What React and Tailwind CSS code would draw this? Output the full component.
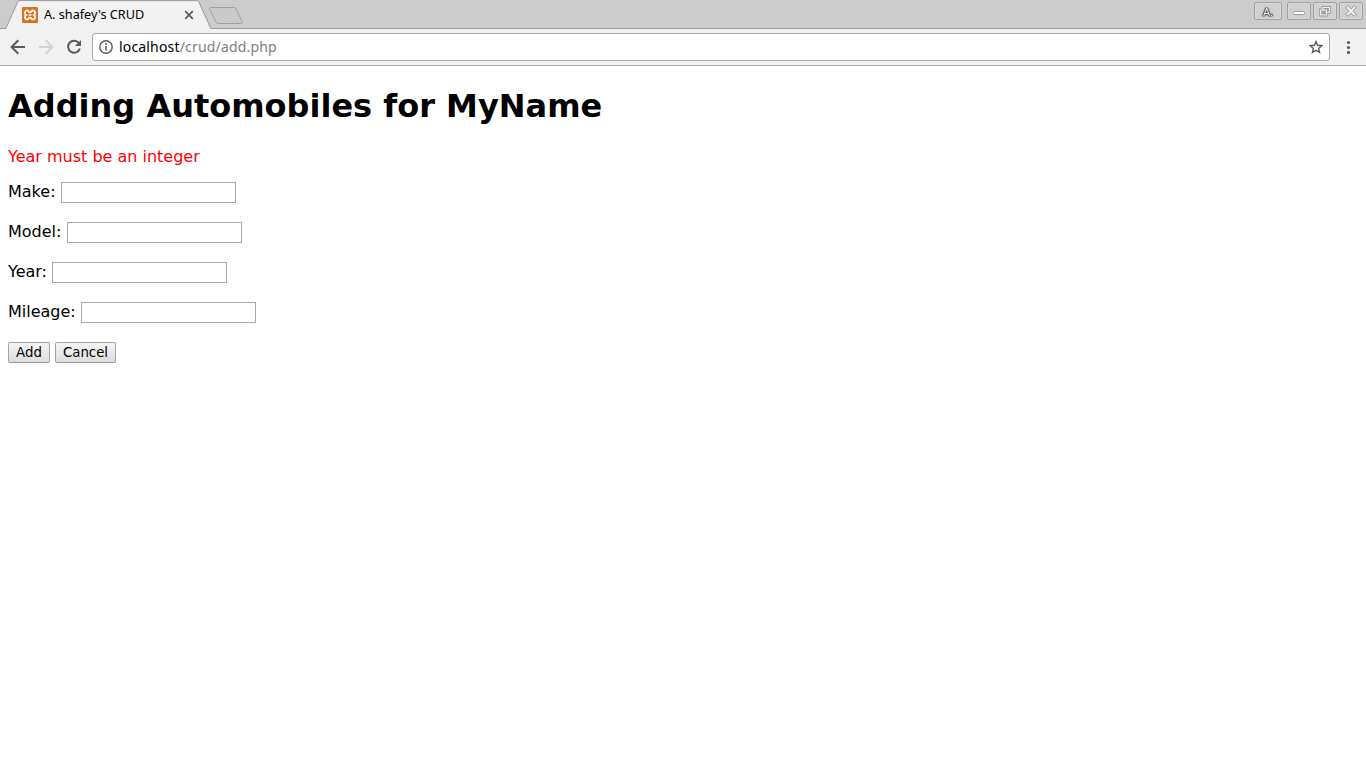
import React from 'react';

function WindowButton({ className, label, children }) {
  return (
    <button
      aria-label={label}
      className={`flex h-[18px] shrink-0 items-center justify-center rounded-[2px] border border-[#a0a0a0] bg-[#d0d0d0] shadow-[inset_0_0_0_1px_#d9d9d9] ${className}`}
    >
      {children}
    </button>
  );
}

function TabStrip() {
  return (
    <div className="relative flex h-[29px] bg-[#cccccc]">
      <svg className="absolute left-0 top-0" width="1366" height="29" viewBox="0 0 1366 29" fill="none">
        <path d="M0 28.5H5.5L17.6 2.2Q18.2 .8 19.8 .8H196.8Q198.4 .8 199 2.2L210.8 28.5H1366V29H0Z" fill="#f2f2f2" />
        <path d="M0 28.5H5.8L17.6 2.2Q18.2 .6 19.8 .6H196.8Q198.4 .6 199 2.2L210.8 28.5H1366" stroke="#999999" />
        <path d="M211 7.5H233.8Q235.6 7.5 236.3 9.2L242 21.5Q242.9 23.5 241.2 23.5H218.5Q216.6 23.5 215.8 21.7L209.7 9.3Q208.9 7.5 211 7.5Z" fill="#cacaca" stroke="#a0a0a0" />
      </svg>
      <div className="relative flex h-[29px] w-[211px] items-center pl-[22px]">
        <svg width="16" height="16" viewBox="0 0 16 16" className="shrink-0">
          <rect width="16" height="16" rx="1.5" fill="#ec6c12" />
          <rect x=".5" y=".5" width="15" height="15" rx="1" fill="none" stroke="#cf7435" />
          <path d="M4 8C2.2 6.8 2.7 3.5 4.9 3.5C6.8 3.5 6.4 5.4 8 5.4C9.6 5.4 9.2 3.5 11.1 3.5C13.3 3.5 13.8 6.8 12 8C13.8 9.2 13.3 12.5 11.1 12.5C9.2 12.5 9.6 10.6 8 10.6C6.4 10.6 6.8 12.5 4.9 12.5C2.7 12.5 2.2 9.2 4 8Z" fill="none" stroke="#fff" strokeWidth="1.9" />
          <path d="M6.3 8H9.7" stroke="#fff" strokeWidth="1.2" />
        </svg>
        <span className="mb-[2px] ml-[6px] w-[140px] whitespace-nowrap font-['Noto_Sans',sans-serif] text-[12.67px] leading-[18px] text-black">A. shafey's CRUD</span>
        <svg width="10" height="10" viewBox="0 0 10 10" className="shrink-0">
          <path d="M1.2 1.2L8.8 8.8M8.8 1.2L1.2 8.8" stroke="#5a5a5a" strokeWidth="1.7" />
        </svg>
      </div>
      <div className="relative ml-auto flex pr-[3px] pt-[2px]">
        <WindowButton label="Profile" className="mr-[5px] w-[28px]">
          <span className="font-['Noto_Sans',sans-serif] text-[11px] font-medium leading-none text-[#f2f2f2] [text-shadow:0_0_1px_#000,0_0_1px_#000,0_0_1px_#111,0_0_1px_#222,0_0_2px_#555]">A.</span>
        </WindowButton>
        <WindowButton label="Minimize" className="mr-[2px] w-[24px]">
          <svg width="14" height="14" viewBox="0 0 14 14">
            <rect x="1.5" y="7.5" width="11" height="3" rx="1" fill="#fff" stroke="#999" />
          </svg>
        </WindowButton>
        <WindowButton label="Restore" className="mr-[2px] w-[24px]">
          <svg width="14" height="14" viewBox="0 0 14 14" fill="none">
            <path d="M5 3.5H11.5V8.5H5ZM2.5 6H8.5V11H2.5Z" stroke="#999" strokeWidth="2.8" />
            <path d="M5 3.5H11.5V8.5H5Z" stroke="#f0f0f0" strokeWidth="1.2" />
            <path d="M2.5 6H8.5V11H2.5Z" fill="#a3a3a3" stroke="#f0f0f0" strokeWidth="1.2" />
          </svg>
        </WindowButton>
        <WindowButton label="Close window" className="w-[24px]">
          <svg width="14" height="14" viewBox="0 0 14 14" fill="none">
            <path d="M2.5 2.5L11.5 11.5M11.5 2.5L2.5 11.5" stroke="#999" strokeWidth="3.6" />
            <path d="M3 3L11 11M11 3L3 11" stroke="#f6f6f6" strokeWidth="1.9" />
          </svg>
        </WindowButton>
      </div>
    </div>
  );
}

function Toolbar() {
  return (
    <div className="flex h-[37px] items-center border-b border-[#b0b0b0] bg-[#f2f2f2] pl-[10px]">
      <svg width="16" height="16" viewBox="0 0 16 16" fill="none" stroke="#5a5a5a" strokeWidth="2">
        <path d="M15 8H2M8.3 1.3L1.6 8L8.3 14.7" />
      </svg>
      <svg className="ml-[12px]" width="16" height="16" viewBox="0 0 16 16" fill="none" stroke="#d3d3d3" strokeWidth="2">
        <path d="M1 8H14M7.7 1.3L14.4 8L7.7 14.7" />
      </svg>
      <svg className="ml-[12px]" width="16" height="16" viewBox="0 0 16 16" fill="none">
        <path d="M12.9 4.1A6 6 0 1 0 13.8 9.6" stroke="#5a5a5a" strokeWidth="2" />
        <path d="M15 1V7H9Z" fill="#5a5a5a" />
      </svg>
      <div className="ml-[10px] flex h-[28px] w-[1238px] items-center rounded-[3px] border border-[#a9a9a9] bg-white pl-[6px]">
        <svg width="14" height="14" viewBox="0 0 14 14" fill="none">
          <circle cx="7" cy="7" r="6.2" stroke="#5a5a5a" strokeWidth="1.4" />
          <path d="M7 6V10.5M7 3.3V5" stroke="#5a5a5a" strokeWidth="1.6" />
        </svg>
        <span className="ml-[6px] whitespace-nowrap font-['Noto_Sans',sans-serif] text-[14px] leading-[20px] tracking-[0.17px] text-black">
          localhost<span className="text-[#808080]">/crud/add.php</span>
        </span>
        <svg className="ml-auto mr-[6px]" width="14" height="14" viewBox="0 0 14 14" fill="none">
          <path d="M7 1.6L8.6 5.3L12.7 5.7L9.6 8.4L10.5 12.4L7 10.3L3.5 12.4L4.4 8.4L1.3 5.7L5.4 5.3Z" stroke="#5a5a5a" strokeWidth="1.4" />
        </svg>
      </div>
      <svg className="ml-[16px]" width="5" height="14" viewBox="0 0 5 14" fill="#5a5a5a">
        <circle cx="2.5" cy="2.5" r="1.6" />
        <circle cx="2.5" cy="7.5" r="1.6" />
        <circle cx="2.5" cy="12.4" r="1.6" />
      </svg>
    </div>
  );
}

function Field({ label, width }) {
  return (
    <label className="mb-[19px] flex h-[21px]">
      <span className={`${width} shrink-0 whitespace-nowrap leading-[19px]`}>{label}</span>
      <input type="text" className="h-[21px] w-[175px] border border-[#a9a9a9] bg-white px-[2px] text-[13.33px] outline-none" />
    </label>
  );
}

function FormButton({ children, className }) {
  return (
    <button type="button" className={`h-[21px] rounded-[2px] border border-[#a6a6a6] border-b-[#999999] bg-linear-to-b from-[#f5f5f5] to-[#dddddd] text-center text-[13.33px] leading-[19px] text-black ${className}`}>
      {children}
    </button>
  );
}

export default function App() {
  return (
    <div className="flex h-[768px] w-[1366px] flex-col overflow-hidden bg-white">
      <TabStrip />
      <Toolbar />
      <main className="px-2 pt-[21px] font-['DejaVu_Sans',sans-serif] text-[16px] text-black">
        <h1 className="h-[38px] text-[32px] font-bold leading-[38px]">Adding Automobiles for MyName</h1>
        <p className="mb-[16px] mt-[22px] h-[19px] leading-[19px] text-[#ff0000]">Year must be an integer</p>
        <form>
          <Field label="Make:" width="w-[53px]" />
          <Field label="Model:" width="w-[59px]" />
          <Field label="Year:" width="w-[44px]" />
          <Field label="Mileage:" width="w-[73px]" />
          <div className="flex gap-[5px]">
            <FormButton className="w-[42px]">Add</FormButton>
            <FormButton className="w-[61px]">Cancel</FormButton>
          </div>
        </form>
      </main>
    </div>
  );
}
